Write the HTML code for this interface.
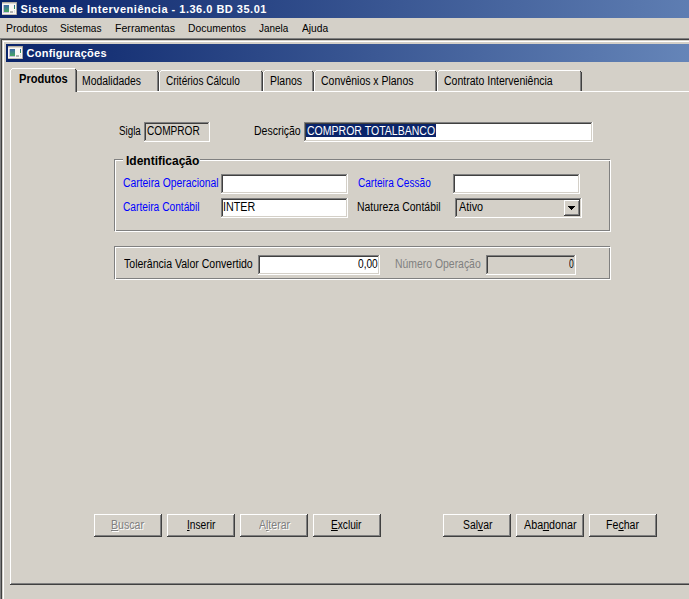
<!DOCTYPE html>
<html><head><meta charset="utf-8"><style>
html,body{margin:0;padding:0;}
body{width:689px;height:599px;overflow:hidden;position:relative;background:#D4D0C8;font-family:"Liberation Sans",sans-serif;}
.r{position:absolute;box-sizing:border-box;}
svg.r{box-sizing:content-box}
.t{position:absolute;white-space:nowrap;font:12px "Liberation Sans",sans-serif;line-height:13px;transform-origin:0 0;}
u{text-decoration:none;position:relative;} u::after{content:'';position:absolute;left:0;right:0;top:12px;height:1px;background:currentColor}
</style></head><body>
<div class="r" style="left:0;top:0;width:1278px;height:18px;background:linear-gradient(to right,#0A246A,#A6CAF0)"></div><div class="r" style="left:2px;top:2px;width:15px;height:13px;background:#FAF8F4"></div><div class="r" style="left:2px;top:2px;width:15px;height:1px;background:#B4AEA2"></div><div class="r" style="left:2px;top:3px;width:15px;height:1px;background:#DCD8D0"></div><div class="r" style="left:2px;top:14px;width:15px;height:1px;background:#C8C2B6"></div><div class="r" style="left:3px;top:5px;width:1px;height:8px;background:#C4BCD8"></div><div class="r" style="left:3px;top:12px;width:6px;height:1px;background:#C8BEDC"></div><div class="r" style="left:4px;top:5px;width:5px;height:7px;background:linear-gradient(#3C68A8,#48A860)"></div><div class="r" style="left:10px;top:11px;width:3px;height:2px;background:#B4B4B4"></div><div class="r" style="left:14px;top:5px;width:1px;height:4px;background:linear-gradient(#2A58A8,#38A848)"></div><div class="r" style="left:14px;top:10px;width:1px;height:3px;background:#E0E0E0"></div><div class="r" style="left:16px;top:2px;width:1px;height:13px;background:#A8A49C"></div><div class="r" style="left:0px;top:38px;width:689px;height:1px;background:#808080"></div><div class="r" style="left:0px;top:39px;width:689px;height:1px;background:#404040"></div><div class="r" style="left:0px;top:38px;width:1px;height:561px;background:#808080"></div><div class="r" style="left:1px;top:39px;width:1px;height:560px;background:#404040"></div><div class="r" style="left:2px;top:40px;width:687px;height:1px;background:#D4D0C8"></div><div class="r" style="left:3px;top:41px;width:686px;height:1px;background:#fff"></div><div class="r" style="left:2px;top:40px;width:1px;height:559px;background:#D4D0C8"></div><div class="r" style="left:3px;top:41px;width:1px;height:558px;background:#fff"></div><div class="r" style="left:6px;top:44px;width:1170px;height:18px;background:linear-gradient(to right,#0A246A,#A6CAF0)"></div><div class="r" style="left:8px;top:46px;width:15px;height:13px;background:#FAF8F4"></div><div class="r" style="left:8px;top:46px;width:15px;height:1px;background:#B4AEA2"></div><div class="r" style="left:8px;top:47px;width:15px;height:1px;background:#DCD8D0"></div><div class="r" style="left:8px;top:58px;width:15px;height:1px;background:#C8C2B6"></div><div class="r" style="left:9px;top:49px;width:1px;height:8px;background:#C4BCD8"></div><div class="r" style="left:9px;top:56px;width:6px;height:1px;background:#C8BEDC"></div><div class="r" style="left:10px;top:49px;width:5px;height:7px;background:linear-gradient(#3C68A8,#48A860)"></div><div class="r" style="left:16px;top:55px;width:3px;height:2px;background:#B4B4B4"></div><div class="r" style="left:20px;top:49px;width:1px;height:4px;background:linear-gradient(#2A58A8,#38A848)"></div><div class="r" style="left:20px;top:54px;width:1px;height:3px;background:#E0E0E0"></div><div class="r" style="left:22px;top:46px;width:1px;height:13px;background:#A8A49C"></div><div class="r" style="left:10px;top:91px;width:679px;height:1px;background:#fff"></div><div class="r" style="left:10px;top:91px;width:1px;height:494px;background:#fff"></div><div class="r" style="left:11px;top:583px;width:678px;height:1px;background:#808080"></div><div class="r" style="left:10px;top:584px;width:679px;height:1px;background:#404040"></div><div class="r" style="left:77px;top:70px;width:80px;height:1px;background:#fff"></div><div class="r" style="left:75px;top:72px;width:1px;height:19px;background:#fff"></div><div class="r" style="left:76px;top:71px;width:1px;height:1px;background:#fff"></div><div class="r" style="left:157px;top:71px;width:1px;height:20px;background:#808080"></div><div class="r" style="left:158px;top:72px;width:1px;height:19px;background:#404040"></div><div class="r" style="left:157px;top:71px;width:1px;height:1px;background:#404040"></div><div class="r" style="left:161px;top:70px;width:100px;height:1px;background:#fff"></div><div class="r" style="left:159px;top:72px;width:1px;height:19px;background:#fff"></div><div class="r" style="left:160px;top:71px;width:1px;height:1px;background:#fff"></div><div class="r" style="left:261px;top:71px;width:1px;height:20px;background:#808080"></div><div class="r" style="left:262px;top:72px;width:1px;height:19px;background:#404040"></div><div class="r" style="left:261px;top:71px;width:1px;height:1px;background:#404040"></div><div class="r" style="left:265px;top:70px;width:47px;height:1px;background:#fff"></div><div class="r" style="left:263px;top:72px;width:1px;height:19px;background:#fff"></div><div class="r" style="left:264px;top:71px;width:1px;height:1px;background:#fff"></div><div class="r" style="left:312px;top:71px;width:1px;height:20px;background:#808080"></div><div class="r" style="left:313px;top:72px;width:1px;height:19px;background:#404040"></div><div class="r" style="left:312px;top:71px;width:1px;height:1px;background:#404040"></div><div class="r" style="left:316px;top:70px;width:119px;height:1px;background:#fff"></div><div class="r" style="left:314px;top:72px;width:1px;height:19px;background:#fff"></div><div class="r" style="left:315px;top:71px;width:1px;height:1px;background:#fff"></div><div class="r" style="left:435px;top:71px;width:1px;height:20px;background:#808080"></div><div class="r" style="left:436px;top:72px;width:1px;height:19px;background:#404040"></div><div class="r" style="left:435px;top:71px;width:1px;height:1px;background:#404040"></div><div class="r" style="left:439px;top:70px;width:141px;height:1px;background:#fff"></div><div class="r" style="left:437px;top:72px;width:1px;height:19px;background:#fff"></div><div class="r" style="left:438px;top:71px;width:1px;height:1px;background:#fff"></div><div class="r" style="left:580px;top:71px;width:1px;height:20px;background:#808080"></div><div class="r" style="left:581px;top:72px;width:1px;height:19px;background:#404040"></div><div class="r" style="left:580px;top:71px;width:1px;height:1px;background:#404040"></div><div class="r" style="left:11px;top:69px;width:65px;height:23px;background:#D4D0C8"></div><div class="r" style="left:12px;top:68px;width:63px;height:1px;background:#fff"></div><div class="r" style="left:10px;top:70px;width:1px;height:22px;background:#fff"></div><div class="r" style="left:11px;top:69px;width:1px;height:1px;background:#fff"></div><div class="r" style="left:75px;top:69px;width:1px;height:23px;background:#808080"></div><div class="r" style="left:76px;top:70px;width:1px;height:22px;background:#404040"></div><div class="r" style="left:75px;top:69px;width:1px;height:1px;background:#404040"></div><div class="r" style="left:11px;top:91px;width:64px;height:1px;background:#D4D0C8"></div><div class="r" style="left:144px;top:122px;width:66px;height:20px;background:#fff"></div><div class="r" style="left:144px;top:122px;width:65px;height:19px;background:#808080"></div><div class="r" style="left:145px;top:123px;width:64px;height:18px;background:#D4D0C8"></div><div class="r" style="left:145px;top:123px;width:63px;height:17px;background:#404040"></div><div class="r" style="left:146px;top:124px;width:62px;height:16px;background:#D4D0C8"></div><div class="r" style="left:304px;top:122px;width:289px;height:20px;background:#fff"></div><div class="r" style="left:304px;top:122px;width:288px;height:19px;background:#808080"></div><div class="r" style="left:305px;top:123px;width:287px;height:18px;background:#D4D0C8"></div><div class="r" style="left:305px;top:123px;width:286px;height:17px;background:#404040"></div><div class="r" style="left:306px;top:124px;width:285px;height:16px;background:#fff"></div><div class="r" style="left:306px;top:124px;width:130px;height:13px;background:#0A246A"></div><div class="r" style="left:114px;top:159px;width:496px;height:72px;border:1px solid #808080"></div><div class="r" style="left:115px;top:160px;width:496px;height:72px;border-right:1px solid #fff;border-bottom:1px solid #fff"></div><div class="r" style="left:115px;top:160px;width:495px;height:71px;border-left:1px solid #fff;border-top:1px solid #fff"></div><div class="r" style="left:123px;top:155px;width:77px;height:8px;background:#D4D0C8"></div><div class="r" style="left:114px;top:246px;width:496px;height:33px;border:1px solid #808080"></div><div class="r" style="left:115px;top:247px;width:496px;height:33px;border-right:1px solid #fff;border-bottom:1px solid #fff"></div><div class="r" style="left:115px;top:247px;width:495px;height:32px;border-left:1px solid #fff;border-top:1px solid #fff"></div><div class="r" style="left:221px;top:174px;width:127px;height:20px;background:#fff"></div><div class="r" style="left:221px;top:174px;width:126px;height:19px;background:#808080"></div><div class="r" style="left:222px;top:175px;width:125px;height:18px;background:#D4D0C8"></div><div class="r" style="left:222px;top:175px;width:124px;height:17px;background:#404040"></div><div class="r" style="left:223px;top:176px;width:123px;height:16px;background:#fff"></div><div class="r" style="left:453px;top:174px;width:127px;height:20px;background:#fff"></div><div class="r" style="left:453px;top:174px;width:126px;height:19px;background:#808080"></div><div class="r" style="left:454px;top:175px;width:125px;height:18px;background:#D4D0C8"></div><div class="r" style="left:454px;top:175px;width:124px;height:17px;background:#404040"></div><div class="r" style="left:455px;top:176px;width:123px;height:16px;background:#fff"></div><div class="r" style="left:221px;top:198px;width:127px;height:20px;background:#fff"></div><div class="r" style="left:221px;top:198px;width:126px;height:19px;background:#808080"></div><div class="r" style="left:222px;top:199px;width:125px;height:18px;background:#D4D0C8"></div><div class="r" style="left:222px;top:199px;width:124px;height:17px;background:#404040"></div><div class="r" style="left:223px;top:200px;width:123px;height:16px;background:#fff"></div><div class="r" style="left:455px;top:198px;width:127px;height:20px;background:#fff"></div><div class="r" style="left:455px;top:198px;width:126px;height:19px;background:#808080"></div><div class="r" style="left:456px;top:199px;width:125px;height:18px;background:#D4D0C8"></div><div class="r" style="left:456px;top:199px;width:124px;height:17px;background:#404040"></div><div class="r" style="left:457px;top:200px;width:123px;height:16px;background:#D4D0C8"></div><div class="r" style="left:564px;top:200px;width:16px;height:16px;background:#404040"></div><div class="r" style="left:564px;top:200px;width:15px;height:15px;background:#fff"></div><div class="r" style="left:565px;top:201px;width:14px;height:14px;background:#808080"></div><div class="r" style="left:565px;top:201px;width:13px;height:13px;background:#D4D0C8"></div><svg class="r" style="left:568px;top:206px" width="7" height="4"><path d="M0 0h7v1h-1v1h-1v1h-1v1h-1v-1h-1v-1h-1v-1h-1z" fill="#000"/></svg><div class="r" style="left:258px;top:255px;width:122px;height:20px;background:#fff"></div><div class="r" style="left:258px;top:255px;width:121px;height:19px;background:#808080"></div><div class="r" style="left:259px;top:256px;width:120px;height:18px;background:#D4D0C8"></div><div class="r" style="left:259px;top:256px;width:119px;height:17px;background:#404040"></div><div class="r" style="left:260px;top:257px;width:118px;height:16px;background:#fff"></div><div class="r" style="left:486px;top:255px;width:90px;height:20px;background:#fff"></div><div class="r" style="left:486px;top:255px;width:89px;height:19px;background:#808080"></div><div class="r" style="left:487px;top:256px;width:88px;height:18px;background:#D4D0C8"></div><div class="r" style="left:487px;top:256px;width:87px;height:17px;background:#404040"></div><div class="r" style="left:488px;top:257px;width:86px;height:16px;background:#D4D0C8"></div><div class="r" style="left:94px;top:514px;width:68px;height:23px;background:#404040"></div><div class="r" style="left:94px;top:514px;width:67px;height:22px;background:#fff"></div><div class="r" style="left:95px;top:515px;width:66px;height:21px;background:#808080"></div><div class="r" style="left:95px;top:515px;width:65px;height:20px;background:#D4D0C8"></div><div class="r" style="left:167px;top:514px;width:68px;height:23px;background:#404040"></div><div class="r" style="left:167px;top:514px;width:67px;height:22px;background:#fff"></div><div class="r" style="left:168px;top:515px;width:66px;height:21px;background:#808080"></div><div class="r" style="left:168px;top:515px;width:65px;height:20px;background:#D4D0C8"></div><div class="r" style="left:240px;top:514px;width:68px;height:23px;background:#404040"></div><div class="r" style="left:240px;top:514px;width:67px;height:22px;background:#fff"></div><div class="r" style="left:241px;top:515px;width:66px;height:21px;background:#808080"></div><div class="r" style="left:241px;top:515px;width:65px;height:20px;background:#D4D0C8"></div><div class="r" style="left:313px;top:514px;width:68px;height:23px;background:#404040"></div><div class="r" style="left:313px;top:514px;width:67px;height:22px;background:#fff"></div><div class="r" style="left:314px;top:515px;width:66px;height:21px;background:#808080"></div><div class="r" style="left:314px;top:515px;width:65px;height:20px;background:#D4D0C8"></div><div class="r" style="left:443px;top:514px;width:68px;height:23px;background:#404040"></div><div class="r" style="left:443px;top:514px;width:67px;height:22px;background:#fff"></div><div class="r" style="left:444px;top:515px;width:66px;height:21px;background:#808080"></div><div class="r" style="left:444px;top:515px;width:65px;height:20px;background:#D4D0C8"></div><div class="r" style="left:516px;top:514px;width:68px;height:23px;background:#404040"></div><div class="r" style="left:516px;top:514px;width:67px;height:22px;background:#fff"></div><div class="r" style="left:517px;top:515px;width:66px;height:21px;background:#808080"></div><div class="r" style="left:517px;top:515px;width:65px;height:20px;background:#D4D0C8"></div><div class="r" style="left:589px;top:514px;width:68px;height:23px;background:#404040"></div><div class="r" style="left:589px;top:514px;width:67px;height:22px;background:#fff"></div><div class="r" style="left:590px;top:515px;width:66px;height:21px;background:#808080"></div><div class="r" style="left:590px;top:515px;width:65px;height:20px;background:#D4D0C8"></div>
<div class="t" style="left:20.40px;top:3px;font:bold 11px 'Liberation Sans';color:#fff;transform:scaleX(1.0000);letter-spacing:0.5px;">Sistema de Interveniência - 1.36.0 BD 35.01</div><div class="t" style="left:26.50px;top:47px;font:bold 11px 'Liberation Sans';color:#fff;transform:scaleX(1.0000);letter-spacing:0.25px;">Configurações</div><div class="t" style="left:6.00px;top:22px;font:11px 'Liberation Sans';color:#000;transform:scaleX(0.9433);">Produtos</div><div class="t" style="left:60.00px;top:22px;font:11px 'Liberation Sans';color:#000;transform:scaleX(0.9183);">Sistemas</div><div class="t" style="left:114.50px;top:22px;font:11px 'Liberation Sans';color:#000;transform:scaleX(0.9626);">Ferramentas</div><div class="t" style="left:187.50px;top:22px;font:11px 'Liberation Sans';color:#000;transform:scaleX(0.9397);">Documentos</div><div class="t" style="left:259.00px;top:22px;font:11px 'Liberation Sans';color:#000;transform:scaleX(0.9010);">Janela</div><div class="t" style="left:302.00px;top:22px;font:11px 'Liberation Sans';color:#000;transform:scaleX(0.9305);">Ajuda</div><div class="t" style="left:19.00px;top:72px;font:bold 12px 'Liberation Sans';color:#000;transform:scaleX(0.9247);">Produtos</div><div class="t" style="left:82.00px;top:74px;font:12px 'Liberation Sans';color:#000;transform:scaleX(0.8671);">Modalidades</div><div class="t" style="left:166.00px;top:74px;font:12px 'Liberation Sans';color:#000;transform:scaleX(0.8376);">Critérios Cálculo</div><div class="t" style="left:270.00px;top:74px;font:12px 'Liberation Sans';color:#000;transform:scaleX(0.8721);">Planos</div><div class="t" style="left:320.50px;top:74px;font:12px 'Liberation Sans';color:#000;transform:scaleX(0.8721);">Convênios x Planos</div><div class="t" style="left:444.00px;top:74px;font:12px 'Liberation Sans';color:#000;transform:scaleX(0.8762);">Contrato Interveniência</div><div class="t" style="left:119.00px;top:124px;font:12px 'Liberation Sans';color:#000;transform:scaleX(0.8145);">Sigla</div><div class="t" style="left:147.00px;top:124px;font:12px 'Liberation Sans';color:#000;transform:scaleX(0.8413);">COMPROR</div><div class="t" style="left:254.00px;top:124px;font:12px 'Liberation Sans';color:#000;transform:scaleX(0.8756);">Descrição</div><div class="t" style="left:307.00px;top:124px;font:12px 'Liberation Sans';color:#fff;transform:scaleX(0.8773);">COMPROR TOTALBANCO</div><div class="t" style="left:126.00px;top:154px;font:bold 12px 'Liberation Sans';color:#000;transform:scaleX(0.9997);">Identificação</div><div class="t" style="left:123.00px;top:176px;font:12px 'Liberation Sans';color:#0000FF;transform:scaleX(0.8632);">Carteira Operacional</div><div class="t" style="left:358.00px;top:176px;font:12px 'Liberation Sans';color:#0000FF;transform:scaleX(0.8388);">Carteira Cessão</div><div class="t" style="left:123.00px;top:200px;font:12px 'Liberation Sans';color:#0000FF;transform:scaleX(0.8503);">Carteira Contábil</div><div class="t" style="left:357.00px;top:200px;font:12px 'Liberation Sans';color:#000;transform:scaleX(0.8701);">Natureza Contábil</div><div class="t" style="left:223.11px;top:200px;font:12px 'Liberation Sans';color:#000;transform:scaleX(0.8943);">INTER</div><div class="t" style="left:459.00px;top:200px;font:12px 'Liberation Sans';color:#000;transform:scaleX(0.9036);">Ativo</div><div class="t" style="left:124.00px;top:257px;font:12px 'Liberation Sans';color:#000;transform:scaleX(0.8785);">Tolerância Valor Convertido</div><div class="t" style="left:395.00px;top:257px;font:12px 'Liberation Sans';color:#808080;transform:scaleX(0.8683);">Número Operação</div><div class="t" style="left:358.00px;top:257px;font:12px 'Liberation Sans';color:#000;transform:scaleX(0.8445);">0,00</div><div class="t" style="left:569.00px;top:257px;font:12px 'Liberation Sans';color:#000;transform:scaleX(0.7143);">0</div>
<div class="t" style="left:112.00px;top:520px;color:#fff;transform:scaleX(0.8835)"><u>B</u>uscar</div><div class="t" style="left:111.00px;top:519px;color:#808080;transform:scaleX(0.8835)"><u>B</u>uscar</div><div class="t" style="left:187.15px;top:519px;color:#000;transform:scaleX(0.8502)"><u>I</u>nserir</div><div class="t" style="left:260.00px;top:520px;color:#fff;transform:scaleX(0.8770)">A<u>l</u>terar</div><div class="t" style="left:259.00px;top:519px;color:#808080;transform:scaleX(0.8770)">A<u>l</u>terar</div><div class="t" style="left:331.00px;top:519px;color:#000;transform:scaleX(0.8470)"><u>E</u>xcluir</div><div class="t" style="left:462.60px;top:519px;color:#000;transform:scaleX(0.8643)">Sal<u>v</u>ar</div><div class="t" style="left:524.00px;top:519px;color:#000;transform:scaleX(0.8958)">Aba<u>n</u>donar</div><div class="t" style="left:606.00px;top:519px;color:#000;transform:scaleX(0.8835)">Fe<u>c</u>har</div>
</body></html>
